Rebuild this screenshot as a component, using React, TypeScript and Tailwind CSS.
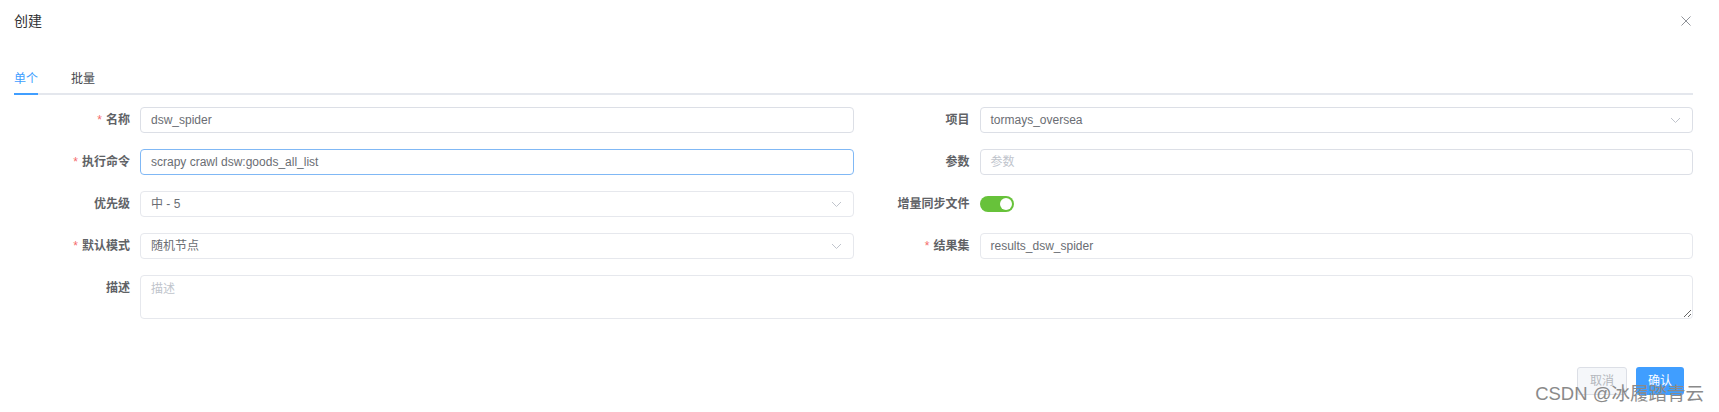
import { ReactNode } from "react";

const font = "font-['Liberation_Sans','Noto_Sans_CJK_SC',sans-serif]";

function Chevron() {
  return (
    <svg width="11" height="7" viewBox="0 0 11 7" className="shrink-0">
      <path d="M1 1l4.5 4.5L10 1" fill="none" stroke="#c0c4cc" strokeWidth="1" />
    </svg>
  );
}

function Field({ label, required, children }: { label: string; required?: boolean; children: ReactNode }) {
  return (
    <div className="flex items-center h-[26px]">
      <label className="w-[126px] shrink-0 pr-[10px] text-right text-[12px] font-bold text-[#606266]">
        {required && <span className="text-[#f56c6c] mr-[4px] font-normal">*</span>}
        {label}
      </label>
      <div className="flex-1 h-full">{children}</div>
    </div>
  );
}

function TextBox({ value, placeholder, focused, light }: { value?: string; placeholder?: string; focused?: boolean; light?: boolean }) {
  return (
    <div
      className={`h-full rounded-[4px] border px-[10px] flex items-center text-[12px] ${
        focused ? "border-[#80b8f5]" : light ? "border-[#e6e8ed]" : "border-[#dcdfe6]"
      }`}
    >
      {value ? <span className="text-[#6a6d73]">{value}</span> : <span className="text-[#c0c4cc]">{placeholder}</span>}
    </div>
  );
}

function SelectBox({ value, light }: { value: string; light?: boolean }) {
  return (
    <div
      className={`h-full rounded-[4px] border px-[10px] flex items-center justify-between text-[12px] ${
        light ? "border-[#e6e8ed]" : "border-[#dcdfe6]"
      }`}
    >
      <span className="text-[#6a6d73]">{value}</span>
      <span className="mr-[1px]">
        <Chevron />
      </span>
    </div>
  );
}

export default function App() {
  return (
    <div className={`relative w-[1719px] h-[412px] overflow-hidden bg-white ${font}`}>
      {/* 头部 */}
      <div className="h-[42px] pl-[14px] pr-[28px] flex items-center justify-between">
        <span className="text-[14px] text-[#303133]">创建</span>
        <svg width="10" height="10" viewBox="0 0 10 10">
          <path d="M0.5 0.5l9 9M9.5 0.5l-9 9" stroke="#909399" strokeWidth="1" />
        </svg>
      </div>

      {/* 标签页 */}
      <div className="mt-[23px] ml-[14px] mr-[26px] h-[30px] border-b-2 border-[#e4e7ed] flex gap-[33px] text-[12px]">
        <div className="relative h-[28px] flex items-center text-[#409eff]">
          单个
          <div className="absolute left-0 right-0 bottom-[-2px] h-[2px] bg-[#409eff]" />
        </div>
        <div className="h-[28px] flex items-center text-[#45474d]">批量</div>
      </div>

      {/* 表单 */}
      <div className="mt-[12px] ml-[14px] mr-[26px] grid grid-cols-2 gap-y-[16px]">
        <Field label="名称" required>
          <TextBox value="dsw_spider" />
        </Field>
        <Field label="项目">
          <SelectBox value="tormays_oversea" />
        </Field>

        <Field label="执行命令" required>
          <TextBox value="scrapy crawl dsw:goods_all_list" focused />
        </Field>
        <Field label="参数">
          <TextBox placeholder="参数" />
        </Field>

        <Field label="优先级">
          <SelectBox value="中 - 5" light />
        </Field>
        <Field label="增量同步文件">
          <div className="h-full flex items-center">
            <div className="w-[34px] h-[16px] rounded-full bg-[#67c23a] flex items-center justify-end pr-[2px]">
              <div className="w-[12px] h-[12px] rounded-full bg-white" />
            </div>
          </div>
        </Field>

        <Field label="默认模式" required>
          <SelectBox value="随机节点" light />
        </Field>
        <Field label="结果集" required>
          <TextBox value="results_dsw_spider" light />
        </Field>

        <div className="col-span-2 flex">
          <label className="w-[126px] shrink-0 pr-[10px] text-right text-[12px] font-bold text-[#606266] leading-[26px]">
            描述
          </label>
          <textarea
            placeholder="描述"
            className="flex-1 h-[44px] rounded-[4px] border border-[#e6e8ed] px-[10px] py-[4px] text-[12px] text-[#606266] placeholder:text-[#c0c4cc] outline-none resize-y"
          />
        </div>
      </div>

      {/* 底部按钮 */}
      <div className="mt-[48px] pr-[35px] flex justify-end gap-[9px] text-[12px]">
        <button className="w-[50px] h-[28px] rounded-[3px] border border-[#dcdfe6] bg-[#f5f7fa] text-[#b4b7bd]">取消</button>
        <button className="w-[48px] h-[28px] rounded-[3px] bg-[#409eff] text-white">确认</button>
      </div>

      {/* 水印 */}
      <div className="absolute right-[15px] top-[384px] text-[18.5px] leading-[20px] text-[#8a8a8a] pointer-events-none">
        CSDN @冰履踏青云
      </div>
    </div>
  );
}
